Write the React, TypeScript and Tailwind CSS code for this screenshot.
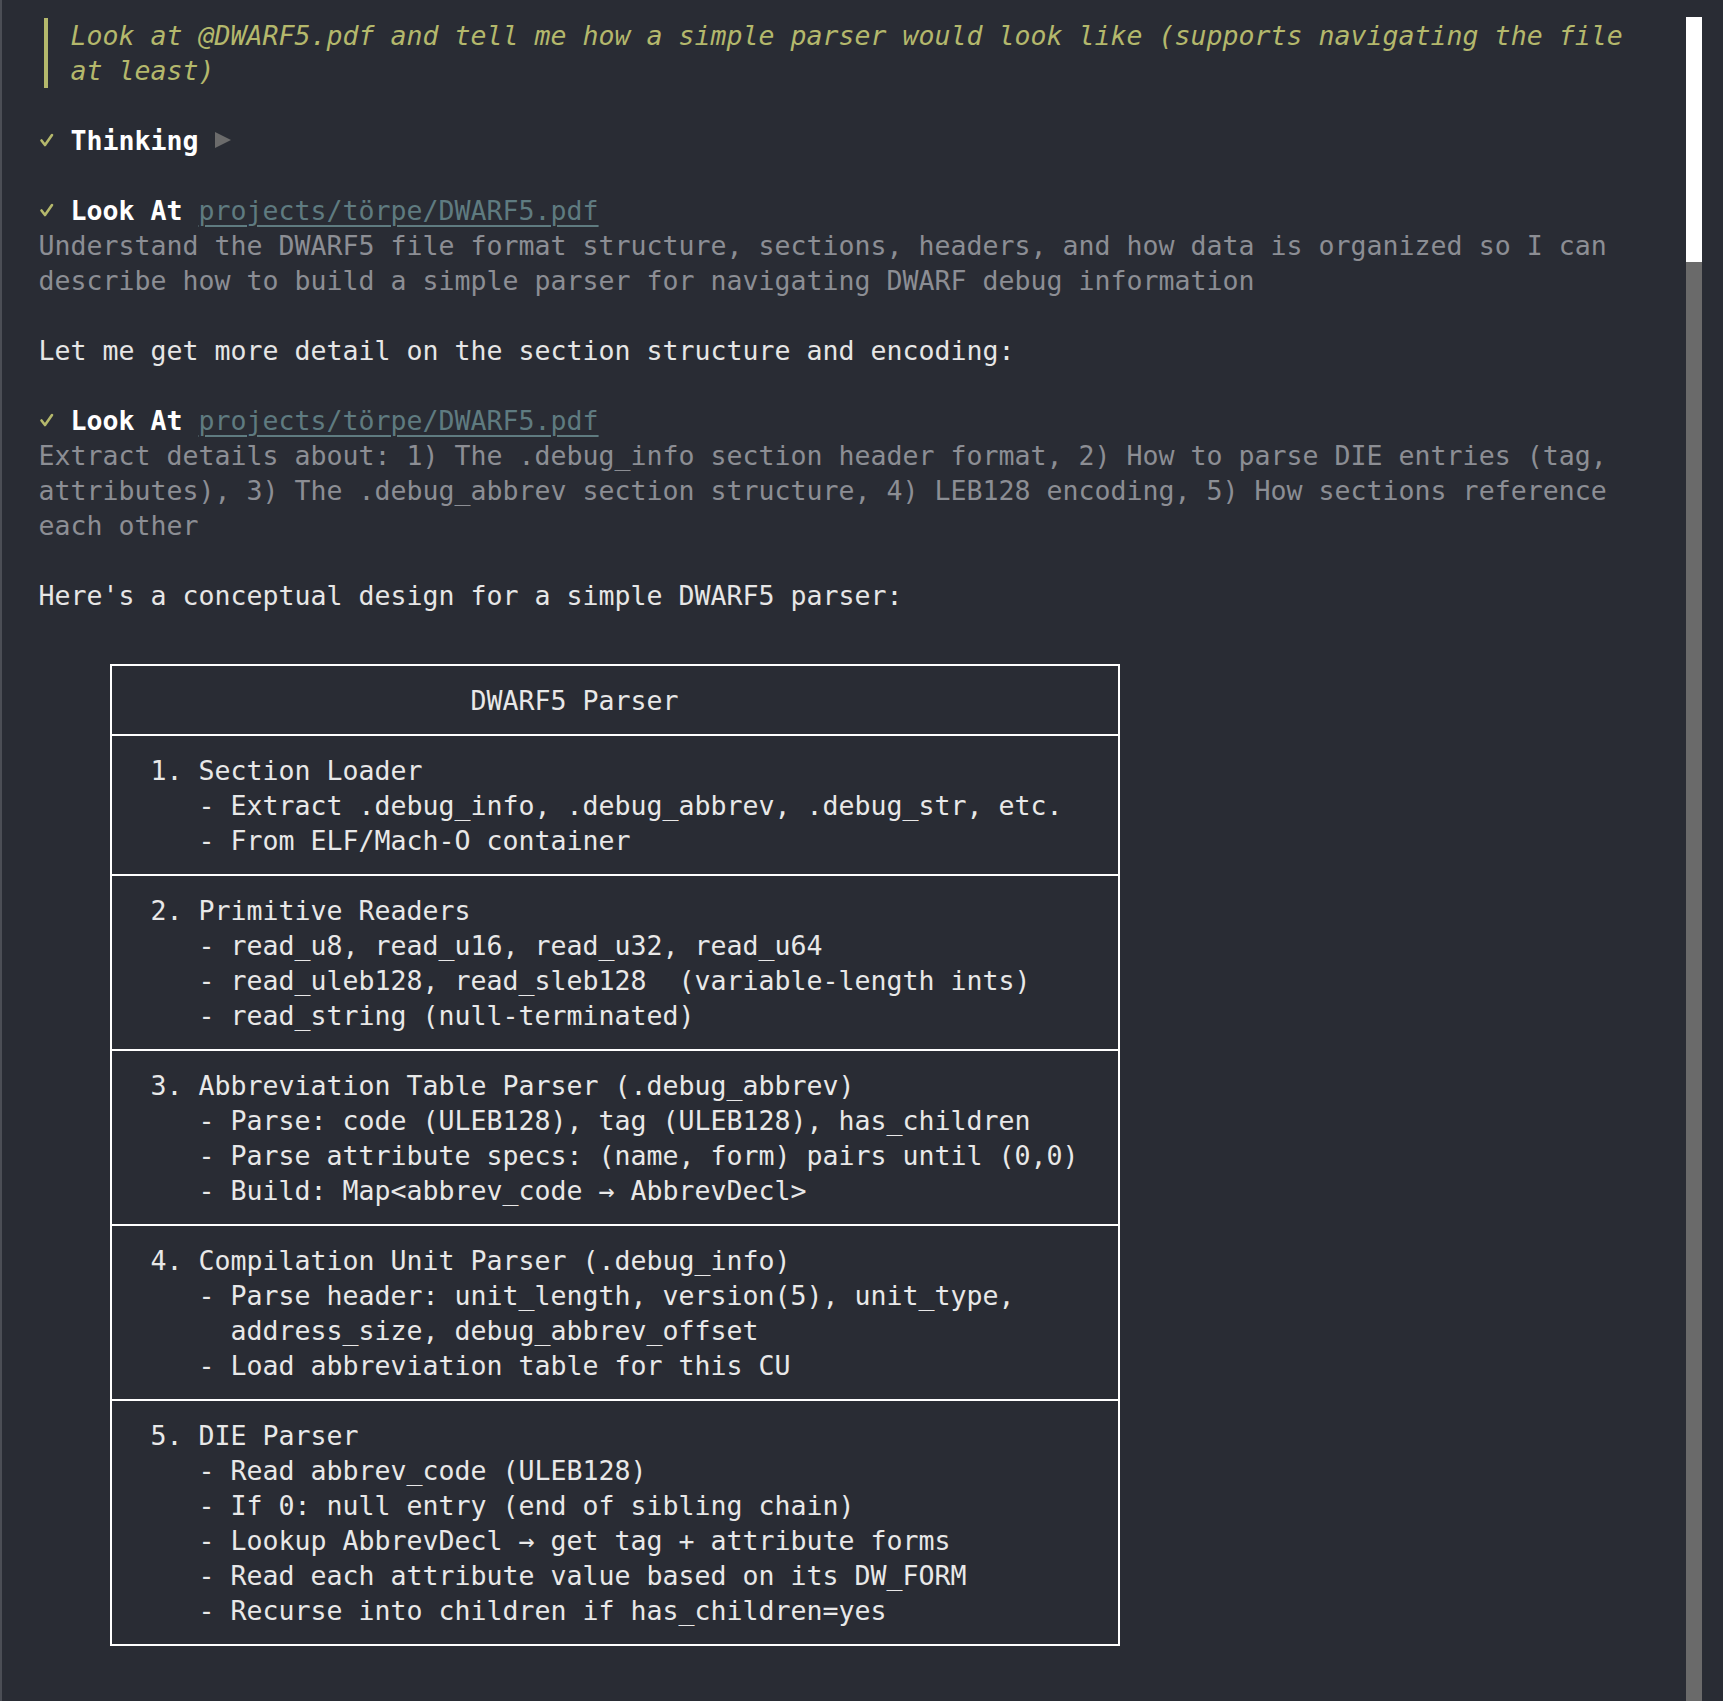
export default function App() {
  const row = "h-[35px] leading-[35px] whitespace-pre";

  const sections: string[][] = [
    ["                      DWARF5 Parser"],
    [
      "  1. Section Loader",
      "     - Extract .debug_info, .debug_abbrev, .debug_str, etc.",
      "     - From ELF/Mach-O container",
    ],
    [
      "  2. Primitive Readers",
      "     - read_u8, read_u16, read_u32, read_u64",
      "     - read_uleb128, read_sleb128  (variable-length ints)",
      "     - read_string (null-terminated)",
    ],
    [
      "  3. Abbreviation Table Parser (.debug_abbrev)",
      "     - Parse: code (ULEB128), tag (ULEB128), has_children",
      "     - Parse attribute specs: (name, form) pairs until (0,0)",
      "     - Build: Map<abbrev_code \u2192 AbbrevDecl>",
    ],
    [
      "  4. Compilation Unit Parser (.debug_info)",
      "     - Parse header: unit_length, version(5), unit_type,",
      "       address_size, debug_abbrev_offset",
      "     - Load abbreviation table for this CU",
    ],
    [
      "  5. DIE Parser",
      "     - Read abbrev_code (ULEB128)",
      "     - If 0: null entry (end of sibling chain)",
      "     - Lookup AbbrevDecl \u2192 get tag + attribute forms",
      "     - Read each attribute value based on its DW_FORM",
      "     - Recurse into children if has_children=yes",
    ],
  ];

  // check mark sits in the first cell of the row
  const Check = () => (
    <span className="inline-flex w-[16px] h-[35px] items-center align-top">
      <svg width="16" height="14" viewBox="0 0 16 14">
        <polyline
          points="2.5,7.5 6,12 13,2"
          fill="none"
          stroke="#b4b86c"
          strokeWidth="2.6"
          strokeLinecap="round"
          strokeLinejoin="round"
        />
      </svg>
    </span>
  );

  const LookAt = () => (
    <div className={row}>
      <Check /> <span className="font-bold text-white">Look At</span>{" "}
      <span className="text-[#5f7b80] underline underline-offset-[5px] decoration-[2px]">
        projects/törpe/DWARF5.pdf
      </span>
    </div>
  );

  return (
    <div className="min-h-screen flex bg-[#292c34] border-l-2 border-[#4b4e55] font-['DejaVu_Sans_Mono',monospace] text-[26.58px] text-[#e6e6e6]">
      <div className="flex-1 pl-[36.5px] pt-[17.5px]">
        <div className="flex">
          <div className="w-[4px] ml-[5.5px] bg-[#b4b86c]" />
          <div className="ml-[22.5px] italic text-[#b4b86c]">
            <div className={row}>
              Look at @DWARF5.pdf and tell me how a simple parser would look like (supports navigating the file
            </div>
            <div className={row}>at least)</div>
          </div>
        </div>
        <div className={row}> </div>
        <div className={row}>
          <Check /> <span className="font-bold text-white">Thinking</span>{" "}
          <span className="inline-flex w-[16px] h-[35px] items-center align-top">
            <svg width="16" height="16" viewBox="0 0 16 16">
              <polygon points="0,0 16,8 0,16" fill="#6b6b6b" />
            </svg>
          </span>
        </div>
        <div className={row}> </div>
        <LookAt />
        <div className="text-[#8c8e94]">
          <div className={row}>
            Understand the DWARF5 file format structure, sections, headers, and how data is organized so I can
          </div>
          <div className={row}>describe how to build a simple parser for navigating DWARF debug information</div>
        </div>
        <div className={row}> </div>
        <div className={row}>Let me get more detail on the section structure and encoding:</div>
        <div className={row}> </div>
        <LookAt />
        <div className="text-[#8c8e94]">
          <div className={row}>
            Extract details about: 1) The .debug_info section header format, 2) How to parse DIE entries (tag,
          </div>
          <div className={row}>
            attributes), 3) The .debug_abbrev section structure, 4) LEB128 encoding, 5) How sections reference
          </div>
          <div className={row}>each other</div>
        </div>
        <div className={row}> </div>
        <div className={row}>Here's a conceptual design for a simple DWARF5 parser:</div>
        <div className={row}> </div>

        <div className="mt-[16px] ml-[71px] w-[1010px] border-2 border-white text-[#e8e8e8]">
          {sections.map((lines, i) => (
            <div
              key={i}
              className={
                (i === 0 ? "pt-[17px] " : "pt-[16.5px] ") +
                "pb-[16.5px] pl-[7px] " +
                (i < sections.length - 1 ? "border-b-2 border-white" : "")
              }
            >
              {lines.map((l, j) => (
                <div key={j} className={row}>
                  {l}
                </div>
              ))}
            </div>
          ))}
        </div>
      </div>

      <div className="w-[16px] mr-[21px] pt-[17px] flex flex-col">
        <div className="h-[245px] bg-white" />
        <div className="flex-1 bg-[#6a6a6a]" />
      </div>
    </div>
  );
}
